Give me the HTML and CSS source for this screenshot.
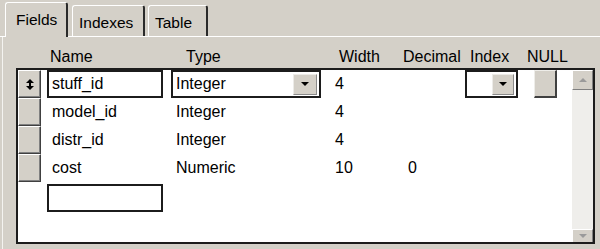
FILE: index.html
```html
<!DOCTYPE html>
<html lang="en">
<head>
  <meta charset="UTF-8">
  <title>Table Structure</title>
  <link rel="stylesheet" href="styles.css">
</head>
<body>
  <div class="tabs">
    <div class="tab active tab-fields">Fields</div>
    <div class="tab tab-indexes">Indexes</div>
    <div class="tab tab-table">Table</div>
  </div>

  <div class="panel">
    <div class="head">
      <span>Name</span>
      <span>Type</span>
      <span>Width</span>
      <span>Decimal</span>
      <span>Index</span>
      <span>NULL</span>
    </div>

    <div class="grid">
      <div class="rows">
        <div class="row">
          <div class="sel">
            <svg width="8" height="11" viewBox="0 0 8 11">
              <path d="M4 0 L8 4 L0 4 Z M3 4 H5 V7 H3 Z M0 7 L8 7 L4 11 Z" fill="#000"/>
            </svg>
          </div>
          <div class="c-name"><span class="edit">stuff_id</span></div>
          <div class="c-type"><span class="combo">Integer<span class="drop"><i></i></span></span></div>
          <div class="c-width">4</div>
          <div class="c-dec"></div>
          <div class="c-idx"><span class="combo small"><span class="drop"><i></i></span></span></div>
          <div class="c-null"><span class="nullbtn"></span></div>
        </div>

        <div class="row">
          <div class="sel"></div>
          <div class="c-name"><span class="plain">model_id</span></div>
          <div class="c-type"><span class="plain">Integer</span></div>
          <div class="c-width">4</div>
          <div class="c-dec"></div>
        </div>

        <div class="row">
          <div class="sel"></div>
          <div class="c-name"><span class="plain">distr_id</span></div>
          <div class="c-type"><span class="plain">Integer</span></div>
          <div class="c-width">4</div>
          <div class="c-dec"></div>
        </div>

        <div class="row">
          <div class="sel"></div>
          <div class="c-name"><span class="plain">cost</span></div>
          <div class="c-type"><span class="plain">Numeric</span></div>
          <div class="c-width">10</div>
          <div class="c-dec">0</div>
        </div>

        <div class="row new">
          <div class="blank"></div>
          <div class="c-name"><span class="edit"></span></div>
        </div>
      </div>

      <div class="scroll">
        <div class="sbtn up"><i></i></div>
        <div class="track"></div>
        <div class="sbtn down"><i></i></div>
      </div>
    </div>
  </div>
</body>
</html>
```

FILE: styles.css
```css
body {
  margin: 0;
  width: 600px;
  height: 249px;
  overflow: hidden;
  background-color: #d4d0c8;
  font-family: "Liberation Sans", Arial, sans-serif;
  font-size: 16px;
  color: #000;
}

/* tab strip */
.tabs {
  display: flex;
  align-items: flex-end;
  height: 36px;
  padding-left: 5px;
  border-bottom: 1px solid #fff;
}

.tab {
  box-sizing: border-box;
  height: 31px;
  display: flex;
  align-items: center;
  padding-top: 4px;
  font-size: 15.5px;
  background-color: #d4d0c8;
  border-top: 1px solid #fff;
  border-left: 1px solid #fff;
  border-right: 2px solid #2a2a2a;
  border-radius: 3px 3px 0 0;
}

.tab.active {
  height: 35px;
  margin-bottom: -1px;
  padding-top: 0;
  position: relative;
  z-index: 1;
}

.tab-fields {
  width: 63px;
  padding-left: 10px;
}

.tab-indexes {
  width: 73px;
  margin-left: 4px;
  padding-left: 6px;
}

.tab-table {
  width: 60px;
  margin-left: 3px;
  padding-left: 6px;
}

/* panel */
.panel {
  margin-left: 2px;
  border-left: 1px solid #f4f3f0;
  height: 212px;
}

.head {
  box-sizing: border-box;
  height: 31px;
  display: grid;
  grid-template-columns: 136px 153px 64px 67px 57px 60px;
  align-items: end;
  padding-left: 47px;
  padding-bottom: 2px;
  line-height: 18px;
}

.grid {
  box-sizing: border-box;
  margin-left: 13px;
  width: 579px;
  height: 176px;
  border: 2px solid #1c1c1c;
  background-color: #fff;
  display: flex;
}

.rows {
  flex: 1;
}

.row {
  display: grid;
  grid-template-columns: 23px 130px 150px 79px 65px 69px 23px;
  height: 28px;
  line-height: 18px;
}

.row > div {
  display: flex;
  align-items: center;
}

.sel {
  box-sizing: border-box;
  justify-content: center;
  background-color: #d4d0c8;
  border-top: 1px solid #fff;
  border-left: 1px solid #fff;
  border-right: 1px solid #404040;
  border-bottom: 1px solid #404040;
  box-shadow: inset -1px -1px 0 #808080;
}

.edit {
  box-sizing: border-box;
  display: flex;
  align-items: center;
  width: 116px;
  height: 28px;
  margin-left: 6px;
  padding-left: 3px;
  border: 2px solid #1c1c1c;
}

.c-name .plain {
  padding-left: 11px;
}

.combo {
  box-sizing: border-box;
  display: flex;
  align-items: center;
  width: 150px;
  height: 28px;
  padding-left: 3px;
  border: 2px solid #1c1c1c;
}

.combo.small {
  width: 53px;
}

.drop {
  box-sizing: border-box;
  margin-left: auto;
  margin-right: 2px;
  width: 24px;
  height: 21px;
  display: flex;
  align-items: center;
  justify-content: center;
  background-color: #d4d0c8;
  border: 1px solid #8a8a8a;
  border-top-color: #ecebe8;
  border-left-color: #ecebe8;
}

.combo.small .drop {
  width: 22px;
}

.drop i,
.sbtn i {
  width: 0;
  height: 0;
  border-left: 4px solid transparent;
  border-right: 4px solid transparent;
  border-top: 4px solid #000;
}

.c-type .plain {
  padding-left: 5px;
}

.c-width {
  padding-left: 14px;
}

.c-dec {
  padding-left: 8px;
}

.nullbtn {
  box-sizing: border-box;
  width: 23px;
  height: 28px;
  background-color: #d4d0c8;
  border-top: 1px solid #eeede9;
  border-left: 1px solid #eeede9;
  border-right: 2px solid #404040;
  border-bottom: 2px solid #404040;
}

.row.new {
  margin-top: 2px;
}

/* scrollbar */
.scroll {
  width: 21px;
  display: flex;
  flex-direction: column;
  background-color: #efeeeb;
}

.sbtn {
  box-sizing: border-box;
  display: flex;
  align-items: center;
  justify-content: center;
  background-color: #d4d0c8;
  border-top: 1px solid #fff;
  border-left: 1px solid #fff;
  border-right: 1px solid #808080;
  border-bottom: 1px solid #808080;
}

.sbtn.up {
  height: 20px;
}

.sbtn.up i {
  border-top: none;
  border-bottom: 4px solid #9a9a9a;
}

.sbtn.down {
  height: 13px;
  border-bottom: none;
}

.sbtn.down i {
  border-top-color: #9a9a9a;
}

.track {
  flex: 1;
}
```
